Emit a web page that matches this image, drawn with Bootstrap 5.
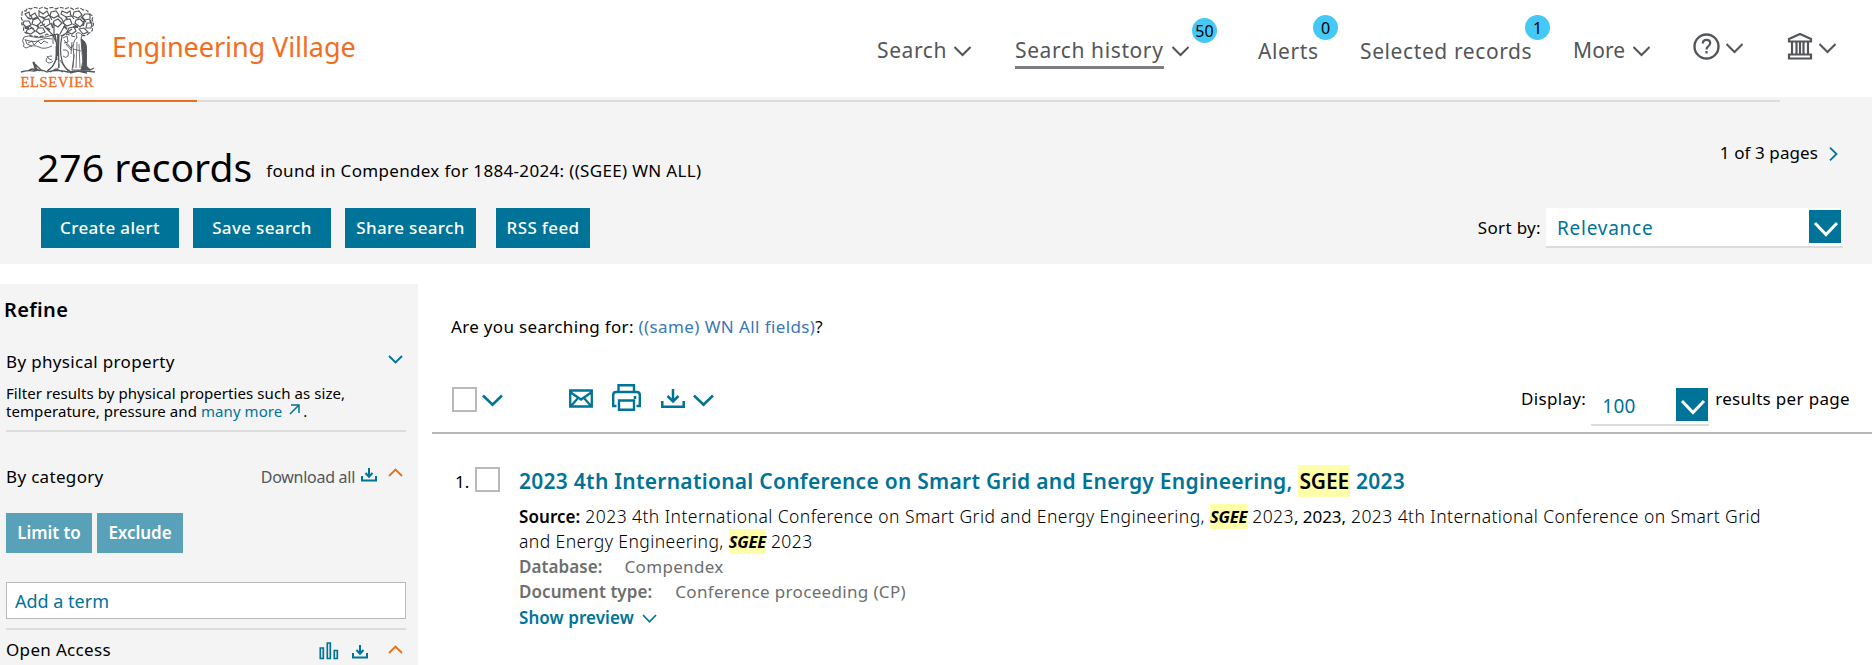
<!DOCTYPE html>
<html lang="en">
<head>
<meta charset="utf-8">
<title>Engineering Village</title>
<link rel="stylesheet" href="https://cdn.jsdelivr.net/npm/bootstrap@5.3.0/dist/css/bootstrap.min.css">
<style>
body{font-family:"Noto Sans",sans-serif;font-size:17px;line-height:24px;letter-spacing:.33px;color:#000;background:#fff;overflow:hidden;height:665px}
a{text-decoration:none;color:#007398}
svg{display:block;flex:none;fill:none;stroke:currentColor}
.nw{white-space:nowrap;display:inline-block}
.site-head{height:97px;color:#53565a}
.logo{margin:6px 0 0 20px}
.brand-name{font-size:27px;letter-spacing:-.07px;line-height:36px;color:#f36d21;margin:29px 0 0 16px}
.top-nav{padding-right:36px;padding-top:35px;font-size:21px;line-height:30px;letter-spacing:.6px}
.top-nav .chev{margin:11px 0 0 8px}
.top-nav .nav-more{letter-spacing:.1px}
.w-search{width:69px}.w-history{width:149px}.w-alerts{width:60px}.w-selected{width:171px}.w-more{width:52px}
.gap-a{margin-left:44px}.gap-b{margin:1px 0 0 69px}.gap-c{margin:1px 0 0 42px}.gap-d{margin-left:42px}
.count-dot{position:absolute;width:25px;height:25px;border-radius:50%;background:#44c8f5;color:#000;font-size:16px;letter-spacing:0;line-height:26px;text-align:center}
.dot-history{left:28px;top:-17px}.dot-alerts{left:55px;top:-21px}.dot-selected{left:165px;top:-21px}
.current{border-bottom:3px solid #7b7d80;height:34px}
.band{height:167px;background:#f4f4f4;padding-top:3px}
.track{height:2px;width:1736px;margin-left:44px;background:#dcdcdc}
.track div{height:2px;width:153px;background:#e9711c}
.found{padding:40px 0 0 41px}
.total{font-size:39px;line-height:50px;letter-spacing:.05px;margin-left:-4px;font-weight:400}
.query{margin:17px 0 0 14px}
.btn-ev{--bs-btn-color:#fff;--bs-btn-bg:#007398;--bs-btn-border-color:#007398;border-radius:0;height:40px;padding:0;font-size:17px;line-height:38px;font-weight:500;letter-spacing:.35px;white-space:nowrap}
.btn-create,.btn-save{width:138px}.btn-share{width:131px}.btn-rss{width:94px}
.btn-ev.soft{--bs-btn-bg:#58a1b8;--bs-btn-border-color:#58a1b8;width:86px;font-weight:600;letter-spacing:-.05px}
.pager{margin:39px 34px 0 0}
.sorter{margin:43px 29px 0 0}
.sorter label{line-height:40px}
.pick{border-bottom:2px solid #dcdcdc;color:#007398;background:#fff;font-size:19px}
.pick-sort{width:297px;height:40px;margin-left:5px;padding:2px 2px 0 11px;line-height:36px;letter-spacing:.75px}
.pick-num{width:118px;height:39px;margin:0 6px 0 5px;padding:1px 1px 0 11px;line-height:36px}
.pick-btn{width:32px;height:33px;background:#007398;color:#fff}
.side{width:418px;height:381px;margin-top:20px;background:#f4f4f4;padding:14px 12px 0 6px}
.side hr,.rule{margin:0;border:0;opacity:1;height:2px;background:#dcdcdc}
.refine{font-size:20px;font-weight:600;line-height:24px;letter-spacing:.35px;margin-left:-2px}
.facet-prop{margin-top:28px;height:24px}
.facet-note{font-size:15px;line-height:18px;letter-spacing:.07px;margin-top:10px;height:46px;width:360px}
.facet-cat{margin-top:33px;height:24px}
.dl-all{font-size:16px;letter-spacing:-.28px;color:#53565a}
.limits{margin-top:24px;gap:5px}
.term{margin:29px 0 9px;height:37px;border:1px solid #b9b9b9;background:#fff;color:#007398;font-size:18px;letter-spacing:0;line-height:37px;padding-left:8px}
.facet-oa{margin-top:8px;height:24px}
.teal{color:#007398}.orange{color:#e9711c}.grey{color:#6e6e6e}
.results{margin:0 0 0 14px}
.suggest{padding:51px 0 0 19px;height:76px}
.suggest a{color:#3a78b7;letter-spacing:.4px}
.tools{height:92px;padding:42px 22px 0 20px}
.rule.dark{background:#b9b9b9}
.box{width:25px;height:25px;border:2px solid #b9b9b9;background:#fff;flex:none}
.hit{background:#ffa;color:#000;display:inline-block}
.title-link{font-size:21px;font-weight:600;line-height:32px;letter-spacing:.265px}
.title-link .hit{letter-spacing:-.1px;padding:0 1px}
.entry{padding:31px 0 0 23px}
.details{margin-left:19px;width:1330px}
.source{font-size:17.5px;line-height:25px;font-weight:300;letter-spacing:.43px;margin-top:7px}
.source b,.meta b{font-size:17px;font-weight:600;letter-spacing:.07px}
.source i{font-weight:700;font-size:16.5px;letter-spacing:-.2px}
.source .mid{font-weight:400;font-size:17px;letter-spacing:-.05px}
.meta{line-height:25px}
</style>
</head>
<body>
<header class="site-head d-flex align-items-start">
  <svg class="logo" width="76" height="84" viewBox="0 0 76 84" stroke="#53565a" stroke-width=".9">
    <g stroke-width="1.15">
      <path d="M2 9q-1-5 4-4q1-4 5-2q4-3 8 0q4-3 8 0q5-3 9 0q5-3 9 0q5-3 9 1q5-4 9 0q5-1 6 4q5 1 3 6q3 4 0 7q2 4-3 6q-3 4-8 2q-4 3-9 1l-5-2q-5 3-10 0q-6 3-10 0q-6 4-12 2q-5 1-7-3q-6 0-4-6q-4-3-1-6q-3-3-1-6z" stroke-dasharray="4 1.500"/>
      <path d="M5 8l4-2l1 4l5-3l2 4l-4 2l-5-1zM19 5l4 3l4-3l2 4l-5 3l-5-2zM31 6l5-1l3 4l-5 3l-4-2zM42 5l5 2l3-2l1 5l-5 1l-5-3zM54 6l5-1l3 4l-4 3l-5-2zM65 8l5 0l0 5l-5 1l-3-3zM4 15l5 0l2 4l-5 2l-3-3zM13 14l5-2l3 4l-4 4l-5-2zM24 14l5-1l1 5l-5 3l-3-4zM34 15l4-2l4 4l-4 4l-5-3zM45 14l5-1l2 5l-5 2l-4-3zM56 14l4-1l4 4l-4 4l-5-4zM67 17l5 0l-1 5l-5 0zM7 24l5-2l3 3l-4 3l-5-1zM18 22l5 0l2 4l-5 2l-4-3zM49 22l5-1l2 4l-4 3l-5-2zM59 23l5-1l4 4l-5 2zM11 10l2 4M29 9l3 5M50 8l4 5M61 11l5 5M9 20l5 3M42 13l2 5M16 9l3 4M38 10l4 3M53 18l5 3M20 20l5-2"/>
      <path d="M8 12l3 1M22 11l3 2M46 11l1 2M64 15l-1 5M31 17l2 5M17 19l2 3M5 22l4 0M58 21l-5 0M70 14l1 3M27 22l3 2M44 20l3 3" stroke-width="1.800"/>
    </g>
    <path d="M25 21l8 8l3 7M34 17v14M45 19l-5 9M52 23l-10 7M35 28q3 14 1 25q-2 8-9 12M42 30q-3 14 0 25q2 7 9 11M39 28q-1 16 0 34" stroke-width="1.200"/>
    <path d="M38 28v22M36.500 40v14" stroke-width="1.800"/>
    <path d="M36 54q-3 7-8 11M40 54q5 8 8 11M39 58q0 4-3 7"/>
    <path d="M4 31q4-2 10 0t19-2v9M4 31q-3 4 0 7q-2 3 2 4M6 34q9 3 14 0t12-1M6 42q8-4 13-1t13-1M8 37l4-2l2 4l4-4l3 3l3-3l4 2M5 33l2 5l5 2"/>
    <path d="M32 50q-6 0-6 5q3 4 7 0M27 50l2 3l3 1M44 34l7 8l3-4M43 32l4-2l1 6l-4 1M43 44q7-1 5 6q-2 3-5 0M46 38l5 6M52 36l-1 12"/>
    <path fill="#fff" d="M56 28q3-3 6 1l-1 4q4 5 3 14l1 17h-13l2-14l-1-9q1-8 4-9z"/>
    <path fill="#53565a" d="M61 33q5 2 5.500 8v18q0 4 3.500 5h-9q3-8 1-18z"/>
    <path d="M57 36l-1 26M59 38l1 24M54 48l-1 14M53 43l8 2" stroke-width=".8"/>
    <path d="M1 66q8-2 13-1q8-2 13 1q10-3 21 0q13-2 27 0M8 65q5-4 8 0l-3-9l4 4l5 5M14 56l3 8M14 61l6 4M30 66l6-3l7 3M50 67l8-2l9 2M67 61l3 3l4-2" stroke-width="1.300"/>
    <text x=".5" y="81" textLength="73" font-family="Liberation Serif, serif" font-size="14.500" letter-spacing="0" fill="#f36d21" stroke="#f36d21" stroke-width=".35">ELSEVIER</text>
  </svg>
  <div class="brand-name nw">Engineering Village</div>
  <nav class="top-nav d-flex align-items-start ms-auto">
    <span class="nw w-search">Search</span>
    <svg class="chev" width="17" height="11" stroke-width="2"><path d="M.5 1l8 8l8-8"/></svg>
    <span class="nw current w-history gap-a">Search history</span>
    <span class="position-relative d-flex"><svg class="chev" width="17" height="11" stroke-width="2"><path d="M.5 1l8 8l8-8"/></svg><span class="count-dot dot-history">50</span></span>
    <span class="position-relative gap-b"><span class="nw w-alerts">Alerts</span><span class="count-dot dot-alerts">0</span></span>
    <span class="position-relative gap-c"><span class="nw w-selected">Selected records</span><span class="count-dot dot-selected">1</span></span>
    <span class="nw nav-more w-more gap-d">More</span>
    <svg class="chev" width="17" height="11" stroke-width="2"><path d="M.5 1l8 8l8-8"/></svg>
    <svg width="27" height="27" stroke-width="2.400" style="margin:-2px 0 0 43px"><circle cx="13.500" cy="13.500" r="12"/><path d="M9.800 10.500q0-3.600 3.700-3.600t3.700 3.200q0 1.900-2 3.200q-1.700 1.100-1.700 3.200M13.500 18v2.600" stroke-width="2.200"/></svg>
    <svg width="17" height="11" stroke-width="2" style="margin:8px 0 0 6px"><path d="M.5 1l8 8l8-8"/></svg>
    <svg width="26" height="28" stroke-width="2.200" style="margin:-3px 0 0 44px"><path d="M2 9.500V7L13 2L24 7v2.500zM5 10v13M9.500 10v13M13 10v13M16.500 10v13M21 10v13M2 22.500h22v4H2z"/></svg>
    <svg width="17" height="11" stroke-width="2" style="margin:8px 0 0 6px"><path d="M.5 1l8 8l8-8"/></svg>
  </nav>
</header>

<section class="band">
  <div class="track"><div></div></div>
  <div class="d-flex justify-content-between align-items-start">
    <div class="found">
      <div class="d-flex align-items-start">
        <h1 class="total nw mb-0">276 records</h1>
        <span class="nw query">found in Compendex for 1884-2024: ((SGEE) WN ALL)</span>
      </div>
      <div class="d-flex mt-3">
        <button class="btn btn-ev btn-create">Create alert</button>
        <button class="btn btn-ev btn-save" style="margin-left:14px">Save search</button>
        <button class="btn btn-ev btn-share" style="margin-left:14px">Share search</button>
        <button class="btn btn-ev btn-rss" style="margin-left:20px">RSS feed</button>
      </div>
    </div>
    <div class="d-flex flex-column align-items-end">
      <div class="pager d-flex">
        <span class="nw" style="letter-spacing:.1px">1 of 3 pages</span>
        <svg class="teal" width="9" height="14" stroke-width="1.800" style="margin:6px 0 0 11px"><path d="M1 .7l6.500 6.300l-6.500 6.300"/></svg>
      </div>
      <div class="sorter d-flex">
        <label class="nw">Sort by:</label>
        <div class="pick pick-sort d-flex justify-content-between"><span>Relevance</span>
          <span class="pick-btn"><svg width="32" height="33" stroke-width="3"><path d="M6 13l11 11.500L28 13"/></svg></span></div>
      </div>
    </div>
  </div>
</section>

<div class="d-flex align-items-start">
  <aside class="side flex-shrink-0">
    <h2 class="refine mb-0">Refine</h2>
    <div class="facet-prop d-flex justify-content-between"><span class="nw">By physical property</span>
      <svg class="teal" width="15" height="10" stroke-width="1.800" style="margin:5px 3px 0 0"><path d="M1 1l6.500 6.500L14 1"/></svg></div>
    <p class="facet-note mb-0">Filter results by physical properties such as size,<br>temperature, pressure and <a href="#">many more <svg class="d-inline" width="11" height="11" stroke-width="1.500" style="margin:-6px 3px 0 3px"><path d="M1 10l9-9M2 1h8v8"/></svg></a>.</p>
    <hr>
    <div class="facet-cat d-flex"><span class="nw me-auto">By category</span>
      <span class="nw dl-all">Download all</span>
      <svg class="teal" width="16" height="14" stroke-width="2" style="margin:3px 0 0 6px"><path d="M1 8v4.500h14V8M8 0v8.500M4.500 5l3.500 3.700L11.500 5"/></svg>
      <svg class="orange" width="15" height="10" stroke-width="1.800" style="margin:3px 3px 0 11px"><path d="M1 8l6.500-6.500L14 8"/></svg></div>
    <div class="limits d-flex">
      <button class="btn btn-ev soft">Limit to</button><button class="btn btn-ev soft">Exclude</button>
    </div>
    <div class="term">Add a term</div>
    <hr>
    <div class="facet-oa d-flex"><span class="nw me-auto">Open Access</span>
      <svg class="teal" width="20" height="18" stroke-width="1.700" style="margin:4px 13px 0 0"><path d="M1.300 6h3v10.500h-3zM8.300 1h3v15.500h-3zM15.300 8.500h3v8h-3z"/></svg>
      <svg class="teal" width="16" height="14" stroke-width="2" style="margin:7px 0 0 0"><path d="M1 8v4.500h14V8M8 0v8.500M4.500 5l3.500 3.700L11.500 5"/></svg>
      <svg class="orange" width="15" height="10" stroke-width="1.800" style="margin:7px 3px 0 20px"><path d="M1 8l6.500-6.500L14 8"/></svg></div>
  </aside>

  <main class="results flex-grow-1">
    <div class="suggest"><span class="nw">Are you searching for: <a href="#">((same) WN All fields)</a>?</span></div>
    <div class="tools d-flex align-items-start">
      <span class="box" style="margin-top:5px"></span>
      <svg class="teal" width="21" height="13" stroke-width="2.600" style="margin:12px 0 0 5px"><path d="M1 1.500l9.500 9.200L20 1.500"/></svg>
      <svg class="teal" width="24" height="19" stroke-width="2.300" style="margin:7px 0 0 66px"><path d="M1.200 1.500h21.600v16H1.200zM1 3l11 7.500L23 3M2 17l7-8M22 17l-7-8"/></svg>
      <svg class="teal" width="29" height="27" stroke-width="2.400" style="margin:2px 0 0 19px"><path d="M6.500 7.500V1.200h15.500v6.300M4.500 22H1.200V11q0-3 3-3h20.600q3 0 3 3v11H24.500M7 16.500h15v9.200H7z"/><path d="M23 12v3" stroke-width="2.500"/></svg>
      <svg class="teal" width="24" height="20" stroke-width="2.500" style="margin:7px 0 0 20px"><path d="M1.300 12v5.700h21.400V12M12 0v12M6.500 7l5.500 5.500L17.500 7"/></svg>
      <svg class="teal" width="21" height="13" stroke-width="2.600" style="margin:12px 0 0 8px"><path d="M1 1.500l9.500 9.200L20 1.500"/></svg>
      <span class="nw ms-auto" style="margin-top:5px">Display:</span>
      <div class="pick pick-num d-flex justify-content-between" style="margin-top:5px"><span>100</span>
        <span class="pick-btn"><svg width="32" height="33" stroke-width="3"><path d="M6 13l11 11.500L28 13"/></svg></span></div>
      <span class="nw" style="margin-top:5px">results per page</span>
    </div>
    <div class="rule dark"></div>
    <article class="entry d-flex align-items-start">
      <span style="width:20px;margin-top:5px;letter-spacing:0">1.</span>
      <span class="box" style="margin-top:2px"></span>
      <div class="details">
        <a href="#" class="title-link nw">2023 4th International Conference on Smart Grid and Energy Engineering, <span class="hit">SGEE</span> 2023</a>
        <div class="source"><b>Source:</b> 2023 4th International Conference on Smart Grid and Energy Engineering, <i class="hit">SGEE</i> 2023<span class="mid">, 2023,</span> 2023 4th International Conference on Smart Grid<br>and Energy Engineering, <i class="hit">SGEE</i> 2023</div>
        <div class="meta grey"><b class="nw" style="margin-right:22px">Database:</b>Compendex</div>
        <div class="meta grey"><b class="nw" style="margin-right:23px">Document type:</b>Conference proceeding (CP)</div>
        <div class="meta teal d-flex" style="padding-top:1px"><b class="nw">Show preview</b><svg width="15" height="10" stroke-width="1.700" style="margin:9px 0 0 8px"><path d="M1 1l6.500 6.800L14 1"/></svg></div>
      </div>
    </article>
  </main>
</div>
<script src="https://cdn.jsdelivr.net/npm/bootstrap@5.3.0/dist/js/bootstrap.bundle.min.js"></script>
</body>
</html>
